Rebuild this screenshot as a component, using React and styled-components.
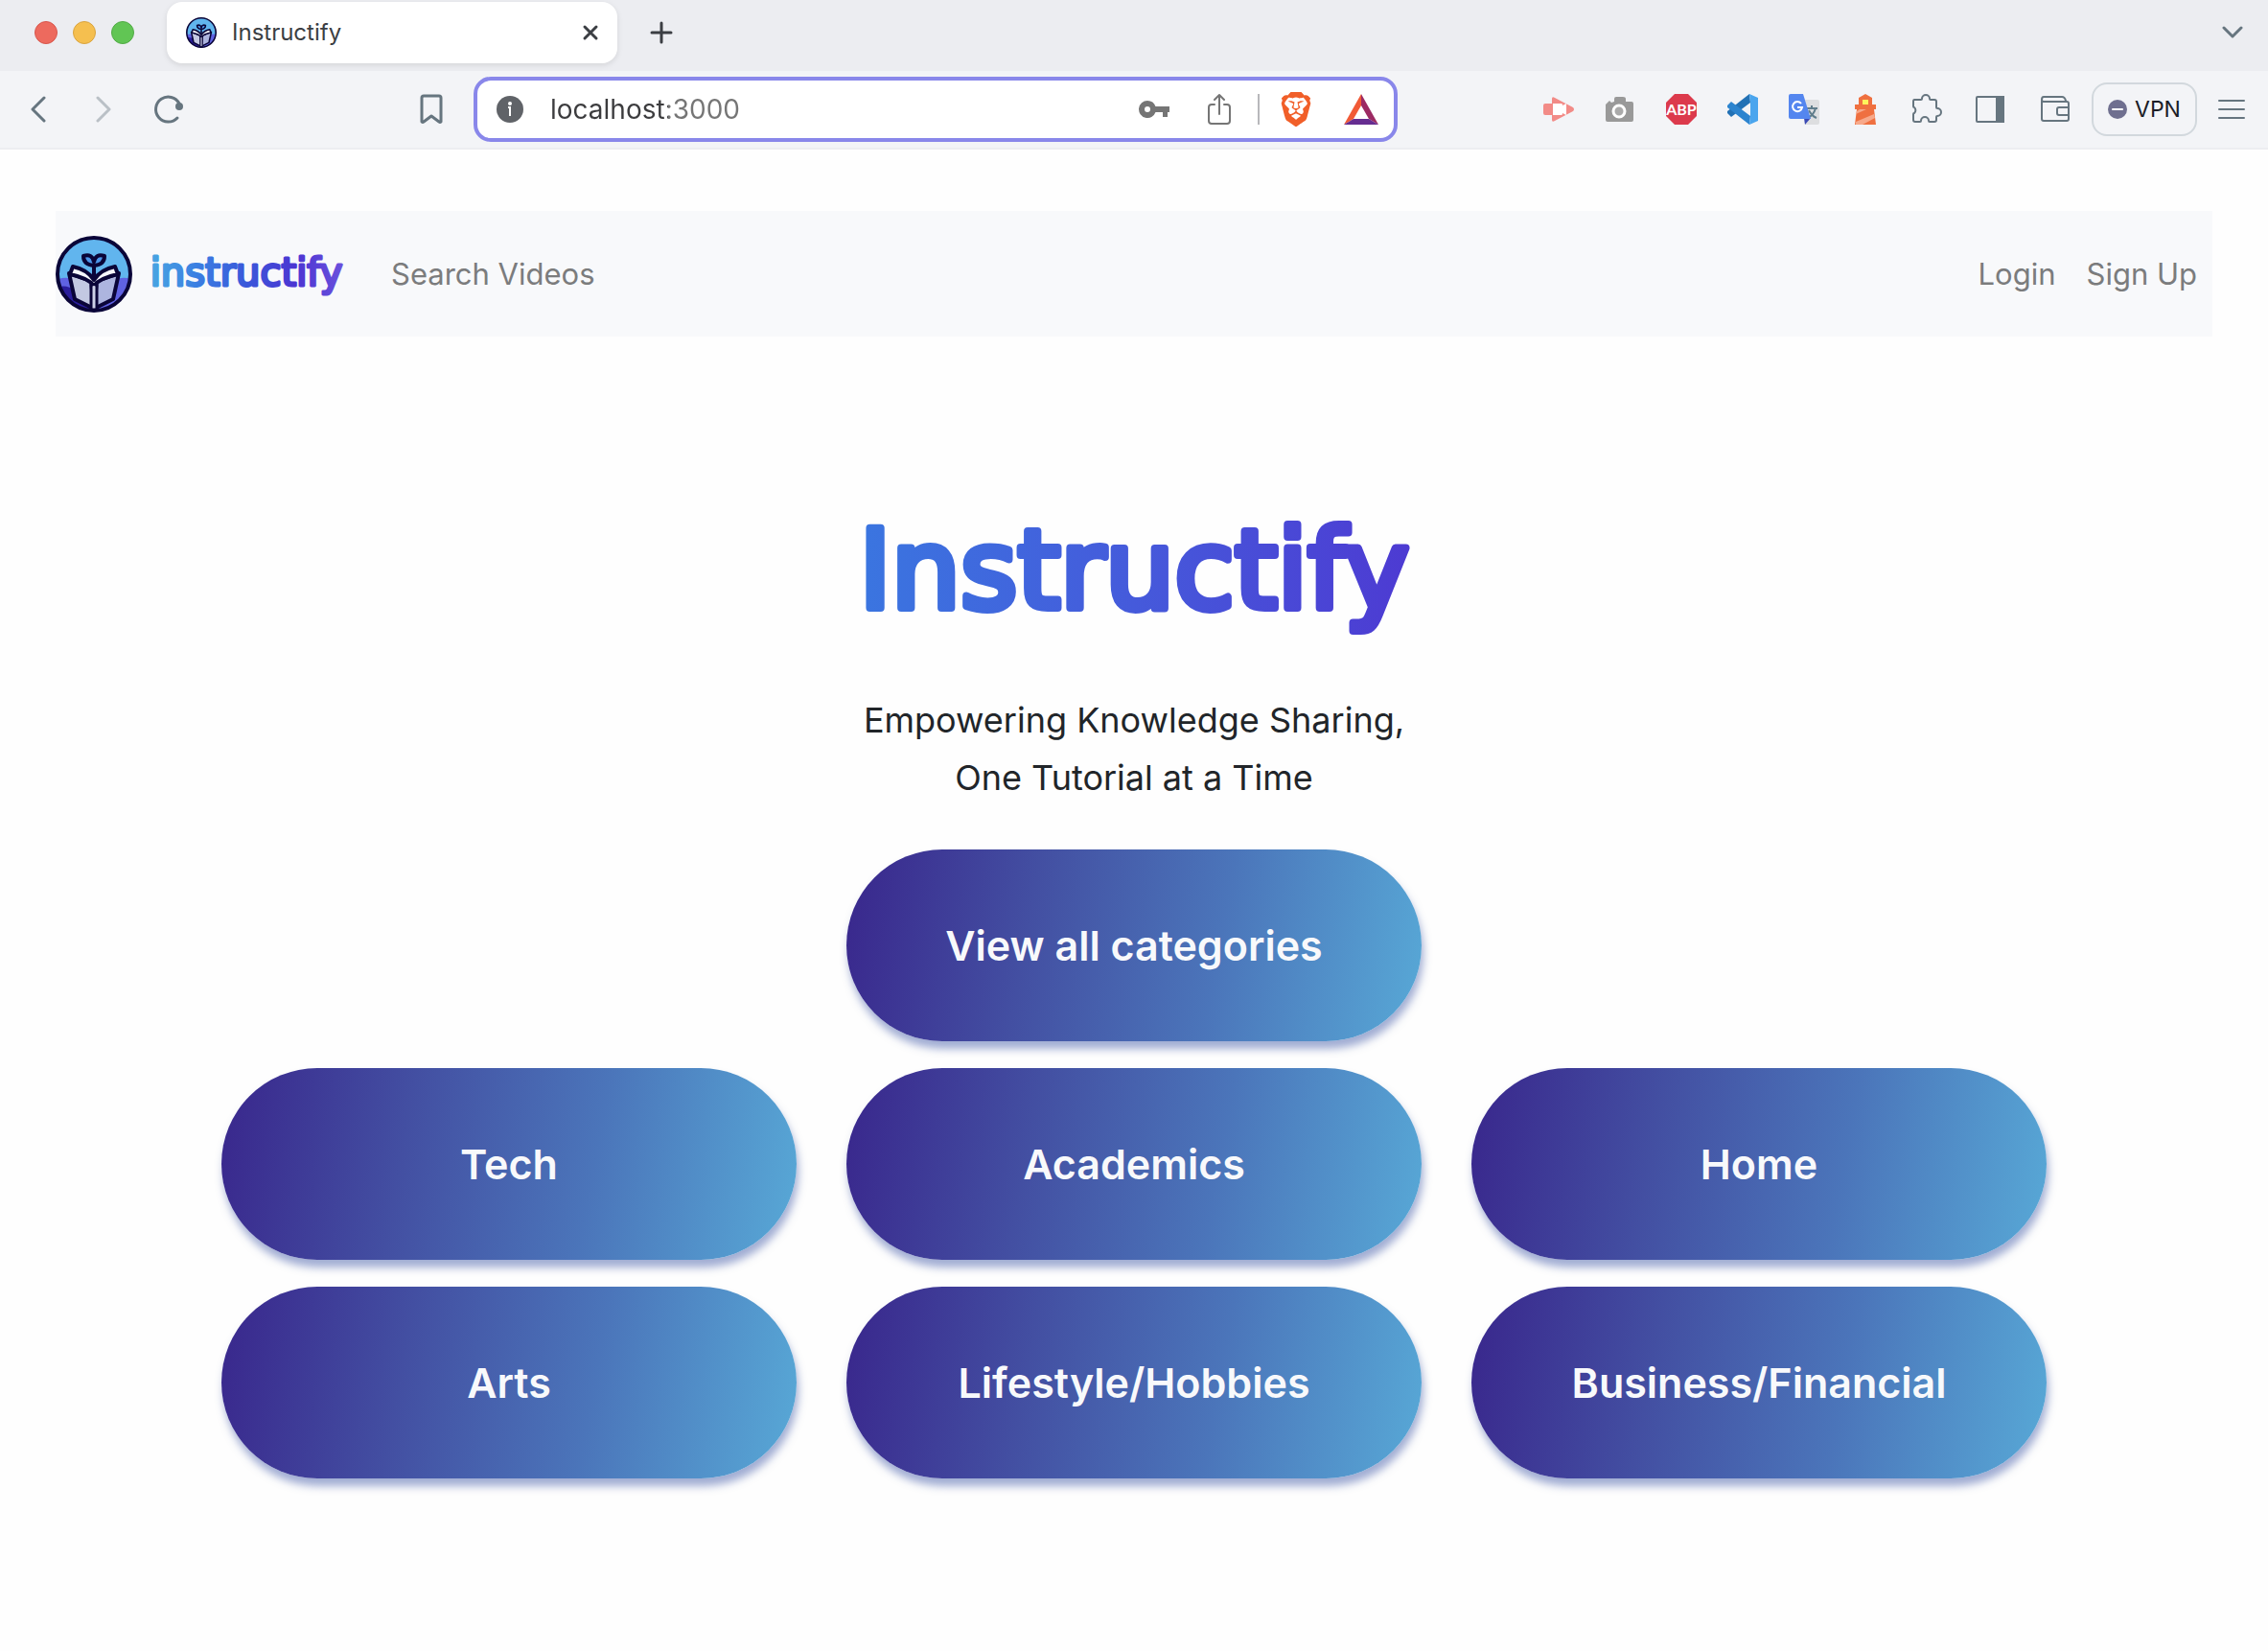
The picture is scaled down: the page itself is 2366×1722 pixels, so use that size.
import React from "react";
import styled, { createGlobalStyle } from "styled-components";
import { SiBrave } from "react-icons/si";

const GlobalStyle = createGlobalStyle`
  *, *::before, *::after { box-sizing: border-box; }
  body {
    margin: 0;
    background: #fefefe;
    color: #212529;
    font-family: Inter, "Liberation Sans", sans-serif;
  }
  svg { display: block; flex: none; }
  button { font: inherit; border: 0; padding: 0; background: none; cursor: pointer; }
`;

/* ---------- browser window ---------- */

const TabStrip = styled.div`
  display: flex;
  align-items: center;
  height: 74px;
  padding: 0 28px 6px 36px;
  background: #ecedf1;
`;

const WindowControls = styled.div`
  display: flex;
  gap: 16px;
  margin-right: 34px;
`;

const WindowDot = styled.button`
  width: 24px;
  height: 24px;
  border: 1px solid ${(p) => p.$edge};
  border-radius: 50%;
  background: ${(p) => p.$fill};
`;

const Tab = styled.div`
  display: flex;
  align-items: center;
  gap: 16px;
  width: 470px;
  height: 64px;
  padding: 0 18px 0 20px;
  border-radius: 16px;
  background: #fff;
  box-shadow: 0 2px 6px rgba(0, 0, 0, 0.1);
  color: #3b3e43;
  font-size: 24px;
  line-height: 32px;
`;

const TabTitle = styled.span`
  flex: 1;
`;

const StripButton = styled.button`
  display: grid;
  place-items: center;
  width: 20px;
  height: 32px;
  color: #3b3e43;
`;

const NewTabButton = styled(StripButton)`
  width: 92px;
`;

const TabListButton = styled(StripButton)`
  margin-left: auto;
  color: #66757f;
`;

const Toolbar = styled.div`
  display: flex;
  align-items: center;
  height: 82px;
  padding: 0 2px 0 6px;
  border-bottom: 2px solid #ecedf1;
  background: #f3f4f7;
  color: #66757f;
`;

const HistoryControls = styled.div`
  display: flex;
  width: 478px;
  margin-right: 10px;
`;

const IconButton = styled.button`
  display: grid;
  place-items: center;
  width: ${(p) => p.$width || 64}px;
  height: 56px;
  margin-left: ${(p) => (p.$pushEnd ? "auto" : 0)};
  color: inherit;
  opacity: ${(p) => (p.disabled ? 0.4 : 1)};
`;

const AddressBar = styled.label`
  display: flex;
  align-items: center;
  flex: 0 1 964px;
  height: 68px;
  padding: 0 2px 0 20px;
  border: 4px solid #8987ea;
  border-radius: 18px;
  background: #fff;
  color: #757575;
`;

const AddressInput = styled.input`
  flex: 1;
  min-width: 0;
  margin-left: 28px;
  padding: 0;
  border: 0;
  outline: 0;
  font: 28px/36px Inter, "Liberation Sans", sans-serif;
  color: transparent;
  background: linear-gradient(90deg, #3c3c3e 123px, #757575 123px);
  -webkit-background-clip: text;
  background-clip: text;
`;

const AddressAction = styled.button`
  display: grid;
  place-items: center;
  width: ${(p) => p.$width}px;
  height: 48px;
  color: inherit;
`;

const AddressDivider = styled.span`
  width: 2px;
  height: 32px;
  margin: 0 2px 0 6px;
  background: #b8b8bb;
`;

const Extensions = styled.div`
  display: flex;
  align-items: center;
  margin-left: auto;
`;

const VpnButton = styled.button`
  display: flex;
  align-items: center;
  justify-content: center;
  gap: 8px;
  width: 110px;
  height: 56px;
  margin-left: 4px;
  border: 2px solid #d2d8dd;
  border-radius: 16px;
  color: #1b1c26;
  && { font-size: 23px; }
`;

/* ---------- site ---------- */

const Site = styled.div`
  padding: 64px 58px;
`;

const Navbar = styled.nav`
  display: flex;
  align-items: center;
  height: 131px;
  background: #f8f9fb;
`;

const Brand = styled.a`
  display: flex;
  align-items: center;
  gap: 16px;
  margin-right: 32px;
`;

const NavLink = styled.a`
  padding: 16px;
  color: #7b7c7d;
  font-size: 31px;
  line-height: 48px;
  text-decoration: none;
`;

const NavEnd = styled.div`
  display: flex;
  margin-left: auto;
`;

const Hero = styled.main`
  display: flex;
  flex-direction: column;
  align-items: center;
  padding-top: 160px;
`;

const Title = styled.h1`
  margin: 0 0 48px;
`;

const Tagline = styled.p`
  margin: 0 0 45px;
  font-size: 36px;
  line-height: 60px;
  text-align: center;
`;

const CategoryGrid = styled.div`
  display: grid;
  grid-template-columns: repeat(3, minmax(0, 600px));
  gap: 28px 52px;
`;

const CategoryButton = styled.button`
  grid-column: ${(p) => (p.$centered ? "2" : "auto")};
  height: 200px;
  border-radius: 100px;
  background: linear-gradient(100deg, #3a2a8e 3%, #434fa2 32%, #4b75ba 64%, #57a6d5 98%);
  box-shadow: 2px 8px 8px rgba(70, 93, 170, 0.5);
  color: #f8f9fb;
  && { font-size: 43px; font-weight: 600; line-height: 60px; }
`;

const CategorySpacer = styled.span``;

/* ---------- drawings ---------- */

function InstructifyMark({ size }) {
  return (
    <svg width={size} height={size} viewBox="0 0 80 80" aria-hidden="true">
      <circle cx="40" cy="40" r="38" fill="#61b5ee" />
      <path d="M3 45q9-3 17 1h42q8-4 16-1a38 38 0 0 1-75 0z" fill="#5f62e2" />
      <path d="M4 53q8-2 17 4l19 20q-27 1-36-24z" fill="#2a1d9c" />
      <path d="M14 39l23 8 3 29-20-10z" fill="#c3c8e2" stroke="#0a0538" strokeWidth="4" strokeLinejoin="round" />
      <path d="M66 39l-23 8-3 29 20-10z" fill="#adb5df" stroke="#0a0538" strokeWidth="4" strokeLinejoin="round" />
      <path d="M18 32q15 3 22 14 7-11 22-14l3 8q-19 4-25 12-6-8-25-12z" fill="#f5f6fb" stroke="#0a0538" strokeWidth="4" strokeLinejoin="round" />
      <path d="M37 52q3-3 6 0v25h-6z" fill="#cdd1e7" stroke="#0a0538" strokeWidth="3" />
      <path d="M40 43V30M40 31q-11-1-11-10 9-3 11 6 2-9 11-6 0 9-11 10z" fill="#4c96ea" stroke="#0a0538" strokeWidth="4" strokeLinejoin="round" />
      <circle cx="40" cy="40" r="38" fill="none" stroke="#0a0538" strokeWidth="4" />
    </svg>
  );
}

function Wordmark({ id, width, height, baseline, size, stroke, stops, children }) {
  return (
    <svg width={width} height={height} viewBox={`0 0 ${width} ${height}`}>
      <defs>
        <linearGradient id={id} gradientUnits="userSpaceOnUse" x1="0" y1="0" x2={width} y2="0">
          {stops.map((c, i) => (
            <stop key={c} offset={i / (stops.length - 1)} stopColor={c} />
          ))}
        </linearGradient>
      </defs>
      <text
        x={width / 2}
        y={baseline}
        textAnchor="middle"
        fontFamily='"DejaVu Sans", sans-serif'
        fontWeight="400"
        fontSize={size}
        fill={`url(#${id})`}
        stroke={`url(#${id})`}
        strokeWidth={stroke}
        strokeLinejoin="round"
      >
        {children}
      </text>
    </svg>
  );
}

function Line({ w, h, d, width = 3, color = "currentColor" }) {
  return (
    <svg width={w} height={h} viewBox={`0 0 ${w} ${h}`} fill="none" stroke={color} strokeWidth={width} strokeLinecap="round" strokeLinejoin="round" aria-hidden="true">
      <path d={d} />
    </svg>
  );
}

const ReloadIcon = () => (
  <svg width="32" height="32" viewBox="0 0 32 32" aria-hidden="true">
    <path d="M25 25A13 13 0 1 1 27 10" fill="none" stroke="currentColor" strokeWidth="3" strokeLinecap="round" />
    <circle cx="27" cy="13" r="4" fill="currentColor" />
  </svg>
);

const InfoIcon = () => (
  <svg width="28" height="28" viewBox="0 0 28 28" aria-hidden="true">
    <circle cx="14" cy="14" r="14" fill="#606368" />
    <circle cx="14" cy="8" r="2" fill="#fff" />
    <path d="M12 12h2v9" fill="none" stroke="#fff" strokeWidth="2" />
  </svg>
);

const KeyIcon = () => (
  <svg width="32" height="18" viewBox="0 0 32 18" aria-hidden="true">
    <path fill="#757575" fillRule="evenodd" d="M9 0a9 9 0 0 1 8.5 6H32v6h-2v5h-5v-5h-7.5A9 9 0 1 1 9 0zm0 6a3 3 0 1 0 0 6 3 3 0 0 0 0-6z" />
  </svg>
);

const TriangleIcon = () => (
  <svg width="36" height="32" viewBox="0 0 36 32" aria-hidden="true">
    <path d="M18 0v12L10 26 0 32z" fill="#f15a36" />
    <path d="M18 0v12l8 14 10 6z" fill="#9c2a63" />
    <path d="M0 32l10-6h16l10 6z" fill="#662d91" />
  </svg>
);

const ScreenRecordIcon = () => (
  <svg width="32" height="26" viewBox="0 0 32 26" aria-hidden="true">
    <path d="M0 9q0-2 2-2h7V2q0-3 3-1l19 10q2 2 0 4L12 25q-3 2-3-1v-5H2q-2 0-2-2z" fill="#f28b87" />
    <path d="M10 7h9q1 0 1 2l4-2v12l-4-2q0 2-1 2h-9z" fill="#fff" />
  </svg>
);

const CameraIcon = () => (
  <svg width="30" height="27" viewBox="0 0 30 27" aria-hidden="true">
    <path d="M9 5V2q0-2 2-2h7q3 0 3 2v3h6q2 0 2 2v17q0 2-2 2H2q-2 0-2-2V8l4-4 2 2z" fill="#999" />
    <circle cx="14" cy="15" r="6" fill="#aaa" stroke="#fff" strokeWidth="3" />
  </svg>
);

const AdblockIcon = () => (
  <svg width="32" height="32" viewBox="0 0 32 32" aria-hidden="true">
    <path d="M9 0h14l9 9v14l-9 9H9l-9-9V9z" fill="#dc3a4c" />
    <text x="16" y="22" textAnchor="middle" fontFamily='Lato, sans-serif' fontWeight="700" fontSize="16" fill="#fff">
      ABP
    </text>
  </svg>
);

const CodeIcon = () => (
  <svg width="32" height="32" viewBox="0 0 32 32" aria-hidden="true">
    <path d="M24 9L4 24l-4-4v-2L23 0z" fill="#2271b5" />
    <path d="M24 23L4 8l-4 4v2l23 18z" fill="#2c84cf" />
    <path d="M23 0l9 4v24l-9 4 1-9V9z" fill="#4aa5ee" />
  </svg>
);

const TranslateIcon = () => (
  <svg width="32" height="32" viewBox="0 0 32 32" aria-hidden="true">
    <path d="M13 6h17q2 0 2 2v22q0 2-2 2H17z" fill="#dddee0" />
    <path d="M19 15h11M24 12v3M28 15q-2 7-8 10M21 17q3 6 8 8" fill="none" stroke="#607d8b" strokeWidth="2" />
    <path d="M16 25h7l-6 7z" fill="#3a49b5" />
    <path d="M2 0h13l8 26H2q-2 0-2-2V2q0-2 2-2z" fill="#5486ef" />
    <path d="M13 10a5 5 0 1 0 1 4h-5" fill="none" stroke="#fff" strokeWidth="2" />
  </svg>
);

const LighthouseIcon = () => (
  <svg width="22" height="32" viewBox="0 0 22 32" aria-hidden="true">
    <path d="M11 0l7 4v7h4v5h-2l2 16H0l2-16H0v-5h4V4z" fill="#ef7040" />
    <path d="M2 18l3-2h7L1 21zM1 29l19-8 1 4-13 7H1z" fill="#f7a98b" />
    <path d="M8 6h6v5H8z" fill="#fdf45c" />
  </svg>
);

const SidebarIcon = () => (
  <svg width="30" height="28" viewBox="0 0 30 28" aria-hidden="true">
    <rect x="1" y="1" width="28" height="26" rx="1" fill="none" stroke="currentColor" strokeWidth="2" />
    <path d="M21 0h9v28h-9z" fill="currentColor" />
  </svg>
);

const VpnOffIcon = () => (
  <svg width="20" height="20" viewBox="0 0 20 20" aria-hidden="true">
    <circle cx="10" cy="10" r="10" fill="#6f6f8f" />
    <path d="M5 10h10" stroke="#fff" strokeWidth="2" strokeLinecap="round" />
  </svg>
);

const PUZZLE =
  "M3 6h7q1 0 1-1a4 4 0 0 1 8 0q0 1 1 1h4q2 0 2 2v6q0 1 1 1a4 4 0 0 1 0 8q-1 0-1 1v3q0 2-2 2h-5q-1 0-1-1a4 4 0 0 0-8 0q0 1-1 1H4q-2 0-2-2v-6q0-1 1-1a4 4 0 0 0 0-6q-1 0-1-1V8q0-2 1-2z";
const WALLET =
  "M1 5V24q0 2 2 2H27q2 0 2-2V8q0-2-2-2H3q-2 0-2-2 0-3 2-3H22q3 0 4 4M29 12H19q-2 0-2 2v4q0 2 2 2H29";

const CATEGORIES = [
  "Tech",
  "Academics",
  "Home",
  "Arts",
  "Lifestyle/Hobbies",
  "Business/Financial",
];

/* ---------- page ---------- */

function BrowserChrome() {
  return (
    <header>
      <TabStrip>
        <WindowControls>
          <WindowDot aria-label="Close window" $fill="#ed6a5e" $edge="#d8564c" />
          <WindowDot aria-label="Minimize window" $fill="#f5bf4f" $edge="#d9a440" />
          <WindowDot aria-label="Zoom window" $fill="#61c554" $edge="#52ab46" />
        </WindowControls>
        <Tab>
          <InstructifyMark size={32} />
          <TabTitle>Instructify</TabTitle>
          <StripButton aria-label="Close tab">
            <Line w={18} h={18} d="M3 3l12 12M15 3L3 15" />
          </StripButton>
        </Tab>
        <NewTabButton aria-label="New tab">
          <Line w={24} h={24} d="M12 2v20M2 12h20" />
        </NewTabButton>
        <TabListButton aria-label="Search tabs">
          <Line w={22} h={14} d="M2 2l9 9 9-9" />
        </TabListButton>
      </TabStrip>
      <Toolbar>
        <HistoryControls>
          <IconButton $width={68} aria-label="Back">
            <Line w={16} h={28} d="M14 2L2 14l12 12" />
          </IconButton>
          <IconButton $width={68} aria-label="Forward" disabled>
            <Line w={16} h={28} d="M2 2l12 12L2 26" />
          </IconButton>
          <IconButton $width={68} aria-label="Reload">
            <ReloadIcon />
          </IconButton>
          <IconButton $width={68} $pushEnd aria-label="Bookmark this page">
            <Line w={24} h={32} d="M2 4q0-2 2-2h16q2 0 2 2v25q-1 1-2 0l-8-6-8 6q-1 1-2 0z" />
          </IconButton>
        </HistoryControls>
        <AddressBar>
          <InfoIcon />
          <AddressInput aria-label="Address" defaultValue="localhost:3000" />
          <AddressAction $width={68} aria-label="Passwords">
            <KeyIcon />
          </AddressAction>
          <AddressAction $width={68} aria-label="Share">
            <Line w={26} h={34} d="M8 12H5q-3 0-3 3v14q0 3 3 3h16q3 0 3-3V15q0-3-3-3h-3M13 22V2M8 7l5-5 5 5" color="#757575" width={2} />
          </AddressAction>
          <AddressDivider />
          <AddressAction $width={72} aria-label="Brave Shields">
            <SiBrave size={36} color="#f15f29" />
          </AddressAction>
          <AddressAction $width={64} aria-label="Brave Rewards">
            <TriangleIcon />
          </AddressAction>
        </AddressBar>
        <Extensions>
          <IconButton aria-label="Screen recorder"><ScreenRecordIcon /></IconButton>
          <IconButton aria-label="Screenshot"><CameraIcon /></IconButton>
          <IconButton aria-label="Adblock Plus"><AdblockIcon /></IconButton>
          <IconButton aria-label="VS Code"><CodeIcon /></IconButton>
          <IconButton aria-label="Translate"><TranslateIcon /></IconButton>
          <IconButton aria-label="Lighthouse"><LighthouseIcon /></IconButton>
          <IconButton aria-label="Extensions"><Line w={32} h={32} d={PUZZLE} width={2} /></IconButton>
          <IconButton $width={68} aria-label="Sidebar"><SidebarIcon /></IconButton>
          <IconButton $width={68} aria-label="Wallet"><Line w={30} h={28} d={WALLET} width={2} /></IconButton>
          <VpnButton><VpnOffIcon />VPN</VpnButton>
          <IconButton $width={72} aria-label="Menu">
            <Line w={28} h={22} d="M1 2h26M1 11h26M1 20h26" width={2} />
          </IconButton>
        </Extensions>
      </Toolbar>
    </header>
  );
}

export default function App() {
  return (
    <>
      <GlobalStyle />
      <BrowserChrome />
      <Site>
        <Navbar>
          <Brand href="#home">
            <InstructifyMark size={80} />
            <Wordmark id="brand-ink" width={206} height={60} baseline={42} size={40} stroke={3}
              stops={["#49a8e2", "#3b7fe2", "#3a58da", "#4c35d2", "#6b52dd"]}>
              instructify
            </Wordmark>
          </Brand>
          <NavLink href="#search">Search Videos</NavLink>
          <NavEnd>
            <NavLink href="#login">Login</NavLink>
            <NavLink href="#signup">Sign Up</NavLink>
          </NavEnd>
        </Navbar>
        <Hero>
          <Title>
            <Wordmark id="title-ink" width={588} height={162} baseline={123} size={114} stroke={8}
              stops={["#3a76e0", "#455adb", "#4d3ad2"]}>
              Instructify
            </Wordmark>
          </Title>
          <Tagline>
            Empowering Knowledge Sharing,
            <br />
            One Tutorial at a Time
          </Tagline>
          <CategoryGrid>
            <CategoryButton $centered>View all categories</CategoryButton>
            <CategorySpacer />
            {CATEGORIES.map((name) => (
              <CategoryButton key={name}>{name}</CategoryButton>
            ))}
          </CategoryGrid>
        </Hero>
      </Site>
    </>
  );
}
